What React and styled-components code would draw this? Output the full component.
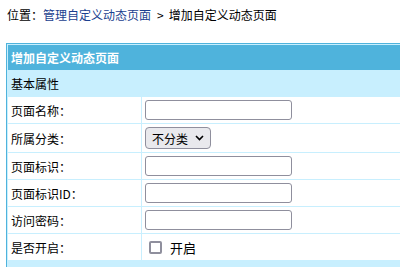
import React from "react";
import styled, { createGlobalStyle } from "styled-components";

const Global = createGlobalStyle`
  html, body { margin: 0; padding: 0; background: #fff; overflow: hidden; }
  body { font-family: "Noto Sans CJK SC", "Noto Sans", sans-serif; font-size: 12px; color: #000; }
`;

const Page = styled.div`
  padding: 6px 0 0 6px;
  width: 560px;
`;

const Crumb = styled.div`
  height: 18px;
  line-height: 18px;
  padding-left: 1px;
  font-size: 12px;
  margin-bottom: 19px;
  white-space: nowrap;
`;

const CrumbLink = styled.a`
  color: #1b3f8f;
  text-decoration: none;
`;

const Sep = styled.span`
  margin: 0 5px 0 6px;
`;

const Frame = styled.div`
  border: 1px solid #4fb3dc;
  border-right: none;
  background: #c8effe;
`;

const Table = styled.table`
  width: 100%;
  border-collapse: separate;
  border-spacing: 1px;
  font-size: 12px;
`;

const HeadCell = styled.td`
  background: #4fb3dc;
  color: #fff;
  font-weight: bold;
  height: 25px;
  padding: 0 3px;
`;

const SectionCell = styled.td`
  background: #c8effe;
  height: 25px;
  padding: 0 3px;
`;

const LabelCell = styled.td`
  background: #fff;
  width: 127px;
  height: ${(p) => p.$h || 26}px;
  padding: 0 3px;
  white-space: nowrap;
`;

const ValueCell = styled.td`
  background: #fff;
  padding: 0 3px;
  height: ${(p) => p.$h || 26}px;
`;

const Input = styled.input`
  box-sizing: border-box;
  width: 147px;
  height: 20px;
  border: 1px solid #8f8f9d;
  border-radius: 3px;
  margin: 0;
  display: block;
  background: #fff;
`;

const SelectWrap = styled.span`
  position: relative;
  display: inline-block;
  vertical-align: middle;
`;

const Select = styled.select`
  appearance: none;
  box-sizing: border-box;
  width: 66px;
  height: 22px;
  border: 1px solid #8f8f9d;
  border-radius: 4px;
  background: #e9e9ed;
  font-family: "Noto Sans CJK SC", sans-serif;
  font-size: 12px;
  color: #000;
  padding: 0 0 0 6px;
  margin: 0;
  display: block;
`;

const Chevron = styled.svg`
  position: absolute;
  right: 7px;
  top: 8px;
  pointer-events: none;
`;

const CheckRow = styled.label`
  display: flex;
  align-items: center;
  gap: 8px;
  padding-left: 4px;
  font-size: 13px;
`;

const Check = styled.input`
  appearance: none;
  box-sizing: border-box;
  width: 13px;
  height: 13px;
  margin: 0;
  border: 2px solid #8f8f9d;
  border-radius: 2px;
  background: #fff;
`;

const FootCell = styled.td`
  background: #c8effe;
  height: 20px;
`;

const rows = [
  { label: "页面名称：", type: "input" },
  { label: "所属分类：", type: "select" },
  { label: "页面标识：", type: "input" },
  { label: "页面标识ID：", type: "input" },
  { label: "访问密码：", type: "input" },
  { label: "是否开启：", type: "check" },
];

export default function App() {
  return (
    <>
      <Global />
      <Page>
        <Crumb>
          位置：<CrumbLink href="#">管理自定义动态页面</CrumbLink>
          <Sep>&gt;</Sep>增加自定义动态页面
        </Crumb>
        <Frame>
          <Table>
            <tbody>
              <tr>
                <HeadCell colSpan={2}>增加自定义动态页面</HeadCell>
              </tr>
              <tr>
                <SectionCell colSpan={2}>基本属性</SectionCell>
              </tr>
              {rows.map((r) => {
                const h = r.type === "select" ? 28 : 26;
                return (
                  <tr key={r.label}>
                    <LabelCell $h={h}>{r.label}</LabelCell>
                    <ValueCell $h={h}>
                      {r.type === "input" && <Input type="text" />}
                      {r.type === "select" && (
                        <SelectWrap>
                          <Select defaultValue="0">
                            <option value="0">不分类</option>
                          </Select>
                          <Chevron width="9" height="6" viewBox="0 0 9 6">
                            <path d="M1 1 L4.5 4.5 L8 1" fill="none" stroke="#000" strokeWidth="1.6" />
                          </Chevron>
                        </SelectWrap>
                      )}
                      {r.type === "check" && (
                        <CheckRow>
                          <Check type="checkbox" />
                          开启
                        </CheckRow>
                      )}
                    </ValueCell>
                  </tr>
                );
              })}
              <tr>
                <FootCell colSpan={2} />
              </tr>
            </tbody>
          </Table>
        </Frame>
      </Page>
    </>
  );
}
